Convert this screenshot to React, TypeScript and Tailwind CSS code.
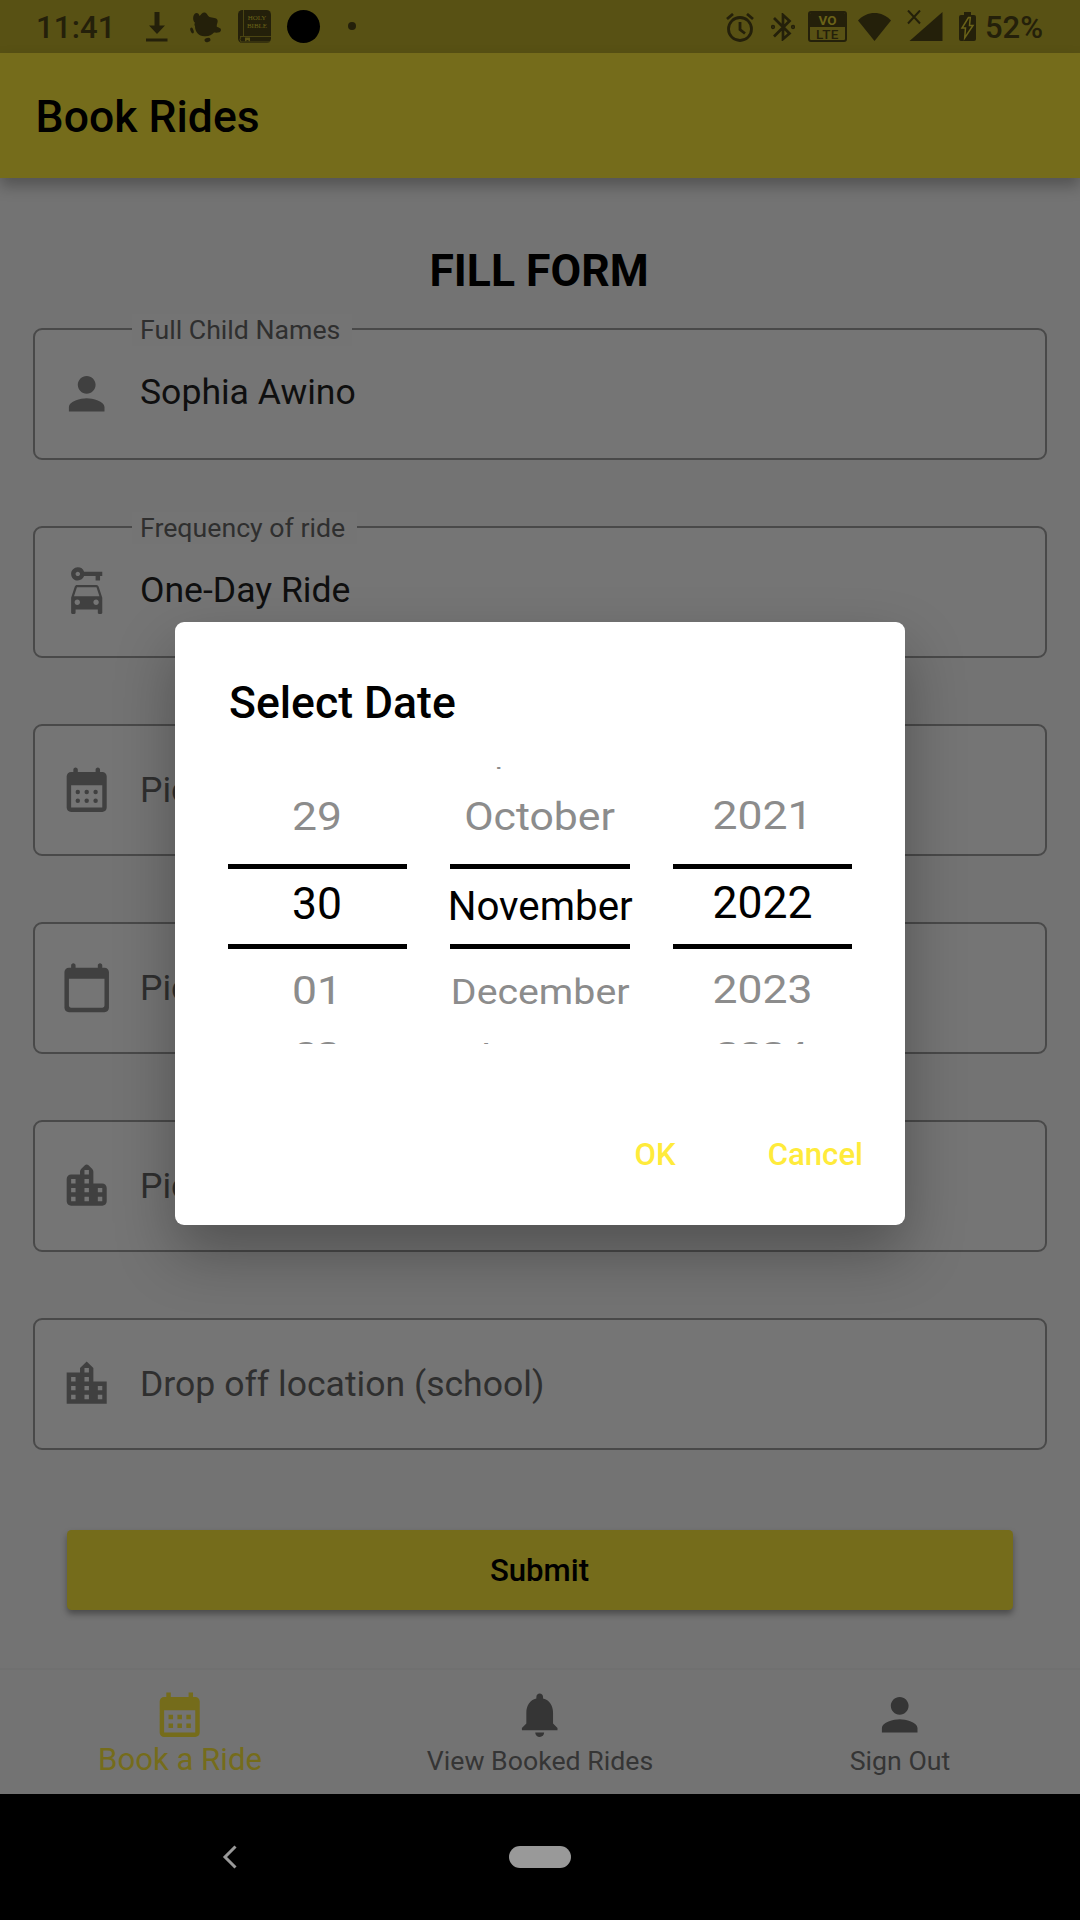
import React from "react";
import { MdPerson, MdNotifications, MdCalendarMonth, MdLocationCity, MdCarRental } from "react-icons/md";

const INK = "#24200a";

function CalendarMonthRounded() {
  return (
    <svg viewBox="0 0 24 24" className="size-full" fill="currentColor">
      <path
        fillRule="evenodd"
        d="M17 2c-.55 0-1 .45-1 1v1H8V3c0-.55-.45-1-1-1s-1 .45-1 1v1H5c-1.11 0-2 .9-2 2v14c0 1.1.89 2 2 2h14c1.1 0 2-.9 2-2V6c0-1.1-.9-2-2-2h-1V3c0-.55-.45-1-1-1zm2 18H5V10h14v10z"
      />
      <circle cx="8" cy="13" r="1" />
      <circle cx="12" cy="13" r="1" />
      <circle cx="16" cy="13" r="1" />
      <circle cx="8" cy="17" r="1" />
      <circle cx="12" cy="17" r="1" />
      <circle cx="16" cy="17" r="1" />
    </svg>
  );
}

function CalendarTodayRounded() {
  return (
    <svg viewBox="0 0 24 24" className="size-full" fill="currentColor">
      <path d="M20 3h-1V2c0-.55-.45-1-1-1s-1 .45-1 1v1H7V2c0-.55-.45-1-1-1s-1 .45-1 1v1H4c-1.1 0-2 .9-2 2v16c0 1.1.9 2 2 2h16c1.1 0 2-.9 2-2V5c0-1.1-.9-2-2-2zm-1 18H5c-.55 0-1-.45-1-1V8h16v12c0 .55-.45 1-1 1z" />
    </svg>
  );
}

function LocationCityRounded() {
  return (
    <svg viewBox="0 0 24 24" className="size-full" fill="currentColor">
      <path d="M15 11V5.83c0-.53-.21-1.04-.59-1.41L12.7 2.71c-.39-.39-1.02-.39-1.41 0l-1.7 1.7C9.21 4.79 9 5.3 9 5.83V7H5c-1.1 0-2 .9-2 2v10c0 1.1.9 2 2 2h14c1.1 0 2-.9 2-2v-6c0-1.1-.9-2-2-2h-4zm-8 8H5v-2h2v2zm0-4H5v-2h2v2zm0-4H5V9h2v2zm6 8h-2v-2h2v2zm0-4h-2v-2h2v2zm0-4h-2V9h2v2zm0-4h-2V5h2v2zm6 12h-2v-2h2v2zm0-4h-2v-2h2v2z" />
    </svg>
  );
}

function StatusBar() {
  return (
    <div className="flex h-[53px] items-start bg-[#585114] text-[#24200a]">
      <span className="mt-[10px] ml-[36px] w-[110px] text-[31px] leading-[36px] font-medium tracking-[0.200px]">11:41</span>
      <svg className="mt-[12px] h-[30px] w-[22px]" viewBox="0 0 22 30" fill={INK}>
        <path d="M8.500 0h5v13.500h5.500L11 22 3 13.500h5.500zM0 26.500h21.500v3H0z" />
      </svg>
      <svg className="mt-[12px] ml-[22px] h-[31px] w-[32px]" viewBox="0 0 32 31" fill={INK}>
        <path d="M5 1.500c2-1.500 4 0 4.500 2.500C11 2.500 12.500 0 15 .5c2 .5 2.500 3.500 4.500 4.500 3 1 7 .5 8 3 .7 2.500-1 4-.8 6.500 1.500 1.500 4.300 1 4.300 3.500 0 2.800-4 3-7 2.600-2.200 2.200-5 4-9.500 3.700C8.500 24 5 20 5 14c-.9-.8-.6-2.200 0-3.200C2.500 9 2.600 3.500 5 1.500z" />
        <ellipse cx="2" cy="18.500" rx="1.500" ry="3" transform="rotate(-20 2 18.500)" />
        <ellipse cx="17.500" cy="28" rx="3" ry="2.100" transform="rotate(-15 17.500 28)" />
      </svg>
      <div className="relative mt-[10px] ml-[16px] h-[33px] w-[33px]">
        <svg className="size-full" viewBox="0 0 33 33">
          <rect width="33" height="33" rx="4.500" fill={INK} />
          <path d="M5.500 0v26.500M2 26.500h31M3 26.500q-2 3 0 5.500h29" stroke="#4a4412" strokeWidth="1" fill="none" />
          <path d="M7 27.500h5v4l-2.500-1.500L7 31.500z" fill="#5a5315" />
        </svg>
        <div className="absolute top-[4px] left-[6px] w-[26px] text-center font-['Liberation_Serif',serif] text-[7px] leading-[8px] text-[#6a6218]">
          HOLY
          <br />
          BIBLE
        </div>
      </div>
      <div className="mt-[10px] ml-[16px] size-[33px] rounded-full bg-black" />
      <div className="mt-[22px] ml-[28px] size-[8px] rounded-full bg-[#24200a]" />
      <svg className="mt-[13px] ml-[370px] h-[29px] w-[28px]" viewBox="0 0 28 29" fill="none" stroke={INK} strokeWidth="2.800">
        <circle cx="14" cy="16" r="11.500" />
        <path d="M14 9v7.500l5 4M1 6l6-5M27 6l-6-5" />
      </svg>
      <svg className="mt-[13px] ml-[17px] h-[28px] w-[24px]" viewBox="0 0 24 28" fill="none" stroke={INK} strokeWidth="2.700">
        <path d="M3 5l15.500 15.500L12 26V2l6.500 6L3 23.500" />
        <circle cx="2" cy="14" r=".8" />
        <circle cx="22" cy="14" r=".8" />
      </svg>
      <div className="mt-[11px] ml-[13px] flex h-[31px] w-[39px] flex-col overflow-hidden rounded-[3px] border-2 border-[#24200a] text-center text-[13.500px] leading-[14px]">
        <span className="h-[14px] bg-[#24200a] font-bold text-[#6a6218]">VO</span>
        <span className="h-[14px] font-medium tracking-[0.500px]">LTE</span>
      </div>
      <svg className="mt-[13px] ml-[11px] h-[28px] w-[33px]" viewBox="0 0 33 28" fill={INK}>
        <path d="M0 7.500C9-2.500 24-2.500 33 7.500L16.500 28z" />
      </svg>
      <svg className="mt-[10px] ml-[16px] h-[31px] w-[36px]" viewBox="0 0 36 31" fill={INK}>
        <path d="M35.500 2v29H2.500z" />
        <path d="M1 .5l12 13M13 .5l-12 13" stroke={INK} strokeWidth="2" />
      </svg>
      <svg className="mt-[12px] ml-[16px] h-[30px] w-[17px]" viewBox="0 0 17 30" fill={INK}>
        <path d="M5 0h7v3h3q2 0 2 2v22q0 2-2 2H2q-2 0-2-2V5q0-2 2-2h3z" />
        <path d="M9.500 5.500L3 16h3.500l-.8 10L14 13.500h-3.500l.8-8z" stroke="#6a6218" strokeWidth="1.500" />
      </svg>
      <span className="mt-[10px] ml-[9px] text-[31px] leading-[36px] font-medium">52%</span>
    </div>
  );
}

type FieldProps = {
  icon: React.ReactNode;
  label?: string;
  value?: string;
  placeholder?: string;
};

function Field({ icon, label, value, placeholder }: FieldProps) {
  return (
    <div className="relative flex h-[132px] items-center rounded-[9px] border-2 border-[#494949] bg-[#757575]">
      {label && (
        <span className="absolute top-[-16px] left-[97px] bg-[#747474] pr-[12px] pl-[8px] text-[26.700px] leading-[32px] text-[#2f2f2f]">
          {label}
        </span>
      )}
      <span className="ml-[25px] size-[53.400px] text-[#404040]">{icon}</span>
      {value ? (
        <span className="mb-[5px] ml-[26.600px] text-[35.600px] leading-[42px] text-[#0f0f0f]">{value}</span>
      ) : (
        <span className="ml-[26.600px] text-[35.600px] leading-[42px] text-[#2f2f2f]">{placeholder}</span>
      )}
    </div>
  );
}

type WheelProps = {
  first?: React.ReactNode;
  prev: React.ReactNode;
  current: React.ReactNode;
  next: React.ReactNode;
  last: React.ReactNode;
};

function Wheel({ first, prev, current, next, last }: WheelProps) {
  return (
    <div className="flex h-[277px] flex-col text-center text-[44.500px] leading-[52px] whitespace-nowrap [overflow-x:visible] [overflow-y:clip]">
      <div className="relative flex h-[97px] flex-col items-center text-[#8c8c8c]">
        {first}
        {prev}
      </div>
      <div className="h-[5px] shrink-0 bg-black" />
      <div className="flex h-[75px] shrink-0 flex-col items-center text-black">{current}</div>
      <div className="h-[5px] shrink-0 bg-black" />
      <div className="flex h-[95px] shrink-0 flex-col items-center text-[#8c8c8c]">
        {next}
        {last}
      </div>
    </div>
  );
}

function DateDialog() {
  return (
    <div className="absolute top-[622px] left-[175px] flex h-[603px] w-[730px] flex-col rounded-[9px] bg-white px-[53px] shadow-[0_28px_60px_rgba(0,0,0,0.3)]">
      <h2 className="mt-[55px] ml-[1px] text-[44.500px] leading-[52px] font-medium text-black">Select Date</h2>
      <div className="mt-[38px] grid grid-cols-[179px_180px_179px] gap-[43px]">
        <Wheel
          prev={<span className="mt-[24px] mr-[1px] scale-y-[0.87]">29</span>}
          current={<span className="mt-[9px] mr-[1px]">30</span>}
          next={<span className="mt-[16px] mr-[1px] scale-y-[0.87]">01</span>}
          last={<span className="mt-[8px] mr-[1px] scale-x-[0.9] scale-y-[0.6]">02</span>}
        />
        <Wheel
          first={<span className="absolute top-[-38.500px] scale-x-[0.78] scale-y-[0.6]">September</span>}
          prev={<span className="mt-[24px] scale-x-[0.96] scale-y-[0.87]">October</span>}
          current={<span className="mt-[10.500px] scale-x-[0.905] scale-y-[0.93]">November</span>}
          next={<span className="mt-[17px] scale-x-[0.883] scale-y-[0.78]">December</span>}
          last={<span className="mt-[8px] scale-x-[0.9] scale-y-[0.6]">January</span>}
        />
        <Wheel
          prev={<span className="mt-[23px] scale-y-[0.87]">2021</span>}
          current={<span className="mt-[8px]">2022</span>}
          next={<span className="mt-[15px] scale-y-[0.87]">2023</span>}
          last={<span className="mt-[9px] scale-x-[0.92] scale-y-[0.6]">2024</span>}
        />
      </div>
      <div className="mt-[92px] mr-[-11px] flex justify-end gap-[92px] text-[31.150px] leading-[38px] font-medium text-[#ffeb3b]">
        <button>OK</button>
        <button>Cancel</button>
      </div>
    </div>
  );
}

export default function App() {
  return (
    <div className="relative flex h-[1920px] w-[1080px] flex-col overflow-hidden bg-[#737373] font-['Roboto',sans-serif]">
      <StatusBar />
      <header className="relative flex h-[125px] items-center bg-[#756c1b] pt-[2px] pl-[35.600px] shadow-[0_8px_14px_rgba(0,0,0,0.28)]">
        <h1 className="text-[44.500px] leading-[52px] font-medium text-black">Book Rides</h1>
      </header>

      <main className="flex h-[1490px] flex-col px-[33px] pt-[67px]">
        <h2 className="mr-[2px] mb-[31px] text-center text-[44.500px] leading-[52px] font-bold text-black">FILL FORM</h2>
        <div className="flex flex-col gap-[66px]">
          <Field icon={<MdPerson className="size-full" />} label="Full Child Names" value="Sophia Awino" />
          <Field icon={<MdCarRental className="size-full" />} label="Frequency of ride" value="One-Day Ride" />
          <Field icon={<CalendarMonthRounded />} placeholder="Pick up date" />
          <Field icon={<CalendarTodayRounded />} placeholder="Pick up time" />
          <Field icon={<LocationCityRounded />} placeholder="Pick up location" />
          <Field icon={<MdLocationCity className="size-full" />} placeholder="Drop off location (school)" />
        </div>
        <button className="mx-[34px] mt-[80px] h-[80px] shrink-0 rounded-[4.500px] bg-[#756c1b] pt-[2px] pr-[1px] text-[31.150px] font-medium text-black shadow-[0_4px_6px_rgba(0,0,0,0.35)]">
          Submit
        </button>
      </main>

      <nav className="grid h-[126px] grid-cols-3 border-t-2 border-[#707070] text-[#353535]">
        <div className="flex flex-col items-center pt-[18px] text-[#756c1b]">
          <MdCalendarMonth className="size-[53.400px]" />
          <span className="text-[31.150px] leading-[37px]">Book a Ride</span>
        </div>
        <div className="flex flex-col items-center pt-[18px]">
          <MdNotifications className="size-[53.400px]" />
          <span className="mt-[4px] text-[26.700px] leading-[32px]">View Booked Rides</span>
        </div>
        <div className="flex flex-col items-center pt-[18px]">
          <MdPerson className="size-[53.400px]" />
          <span className="mt-[4px] text-[26.700px] leading-[32px]">Sign Out</span>
        </div>
      </nav>

      <footer className="grid h-[126px] grid-cols-[459px_162px_459px] items-center bg-black">
        <svg className="ml-[222px] h-[24px] w-[16px]" viewBox="0 0 16 24" fill="none" stroke="#999" strokeWidth="3">
          <path d="M13.500 1.500L3 12l10.500 10.500" />
        </svg>
        <div className="h-[22px] w-[62px] justify-self-center rounded-full bg-[#999]" />
      </footer>

      <DateDialog />
    </div>
  );
}
